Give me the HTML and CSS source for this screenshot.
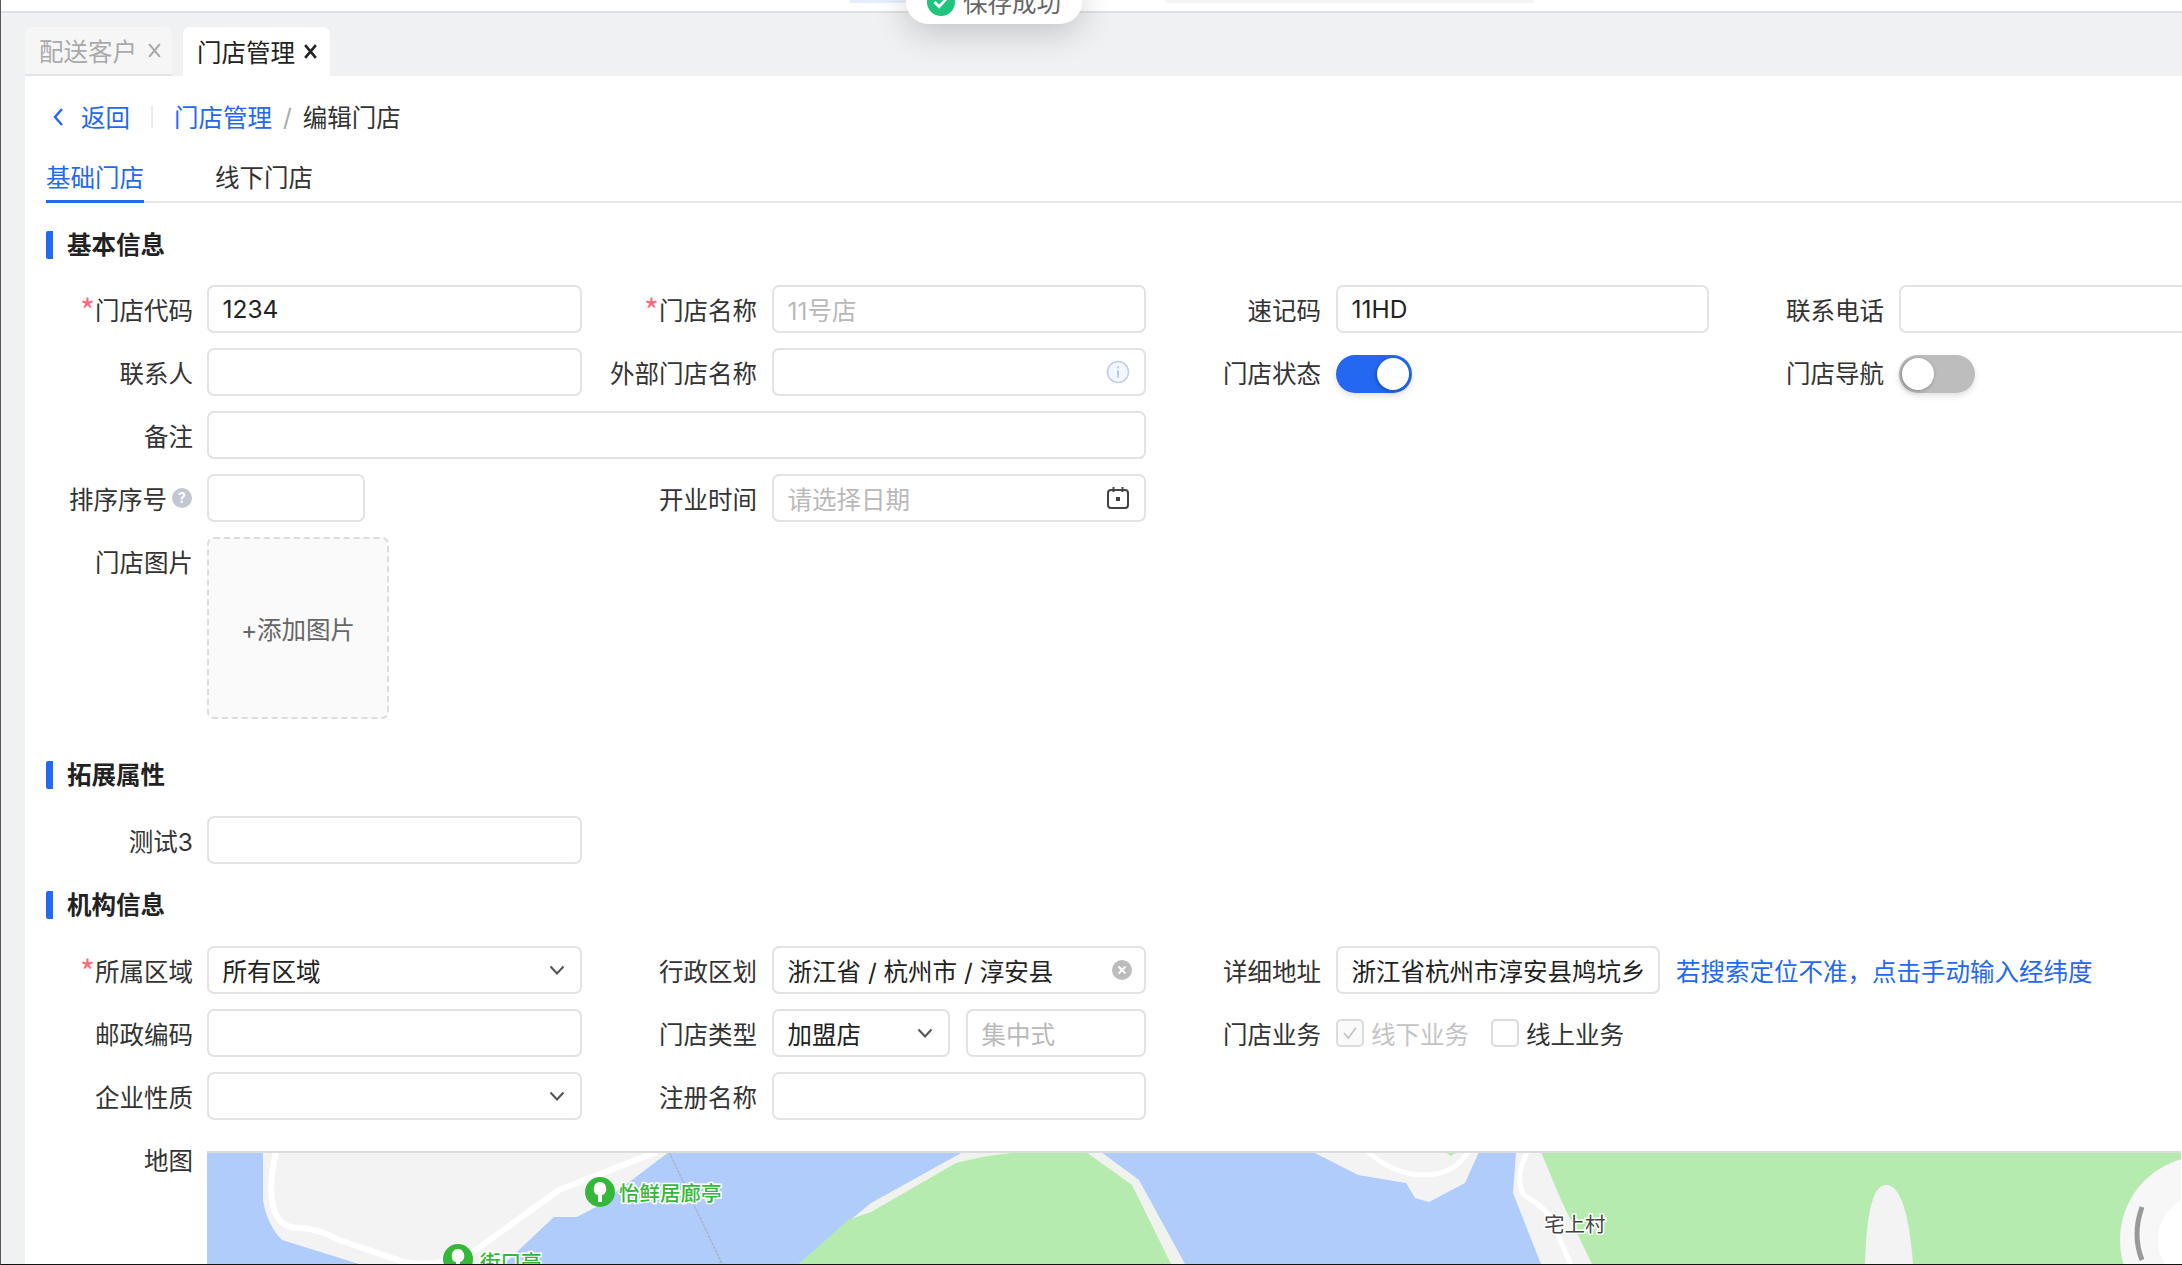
FILE: index.html
```html
<!DOCTYPE html>
<html lang="zh-CN">
<head>
  <meta charset="UTF-8">
  <title>编辑门店</title>
  <link rel="stylesheet" href="styles.css">
</head>
<body>
  <!-- Top bar -->
  <div class="topbar">
    <span class="topbar-seg seg-blue"></span>
    <span class="topbar-seg seg-gray"></span>
  </div>

  <!-- Toast -->
  <div class="toast">
    <svg class="toast-icon" viewBox="0 0 30 30"><circle cx="15" cy="15" r="15" fill="#1fc47d"/><path d="M8 15l5 5 9-10" fill="none" stroke="#fff" stroke-width="3"/></svg>
    <span>保存成功</span>
  </div>

  <!-- Page tabs -->
  <div class="page-tabs">
    <div class="page-tab">配送客户
      <svg class="tab-close" viewBox="0 0 14 14"><path d="M2 1l10 12M12 1L2 13" stroke="#aaa" stroke-width="2"/></svg>
    </div>
    <div class="page-tab active">门店管理
      <svg class="tab-close" viewBox="0 0 14 14"><path d="M2 1l10 12M12 1L2 13" stroke="#222" stroke-width="2.4"/></svg>
    </div>
  </div>

  <div class="content">
    <!-- Breadcrumb -->
    <div class="crumbs">
      <svg class="back-icon" viewBox="0 0 12 20"><path d="M10 2L3 10l7 8" fill="none" stroke="#2468f2" stroke-width="2.4"/></svg>
      <a class="link back-link">返回</a>
      <span class="crumb-divider"></span>
      <a class="link">门店管理</a>
      <span class="crumb-sep">/</span>
      <span>编辑门店</span>
    </div>

    <div class="sub-tabs">
      <div class="sub-tab active">基础门店</div>
      <div class="sub-tab">线下门店</div>
    </div>

    <!-- 基本信息 -->
    <h3 class="section-title first">基本信息</h3>
    <div class="form-grid">
      <label class="label row-start"><i>*</i>门店代码</label>
      <div class="input">1234</div>
      <label class="label"><i>*</i>门店名称</label>
      <div class="input placeholder">11号店</div>
      <label class="label">速记码</label>
      <div class="input">11HD</div>
      <label class="label">联系电话</label>
      <div class="input"></div>

      <label class="label row-start">联系人</label>
      <div class="input"></div>
      <label class="label">外部门店名称</label>
      <div class="input">
        <svg class="input-icon" viewBox="0 0 24 24"><circle cx="12" cy="12" r="10.5" fill="#f4f7fd" stroke="#c5d0e4" stroke-width="1.6"/><path d="M12 10.5v7M12 6.5v2" stroke="#a9bbdb" stroke-width="1.6"/></svg>
      </div>
      <label class="label">门店状态</label>
      <div class="switch on"><span class="knob"></span></div>
      <label class="label">门店导航</label>
      <div class="switch"><span class="knob"></span></div>

      <label class="label row-start">备注</label>
      <div class="input span-3"></div>

      <label class="label row-start">排序序号
        <svg class="help-icon" viewBox="0 0 20 20"><circle cx="10" cy="10" r="10" fill="#c3c7d2"/><text x="10" y="15" text-anchor="middle" class="help-mark">?</text></svg>
      </label>
      <div class="input short"></div>
      <label class="label">开业时间</label>
      <div class="input placeholder">请选择日期
        <svg class="input-icon" viewBox="0 0 24 24"><rect x="2" y="4" width="20" height="18" rx="3" fill="none" stroke="#444" stroke-width="2"/><path d="M7.5 1v5M16.5 1v5" stroke="#444" stroke-width="2"/><rect x="10" y="11" width="4" height="4" fill="#444"/></svg>
      </div>

      <label class="label row-start">门店图片</label>
      <div class="upload">+添加图片</div>
    </div>

    <!-- 拓展属性 -->
    <h3 class="section-title">拓展属性</h3>
    <div class="form-grid">
      <label class="label row-start">测试3</label>
      <div class="input"></div>
    </div>

    <!-- 机构信息 -->
    <h3 class="section-title tight">机构信息</h3>
    <div class="form-grid">
      <label class="label row-start"><i>*</i>所属区域</label>
      <div class="input">所有区域
        <svg class="chevron" viewBox="0 0 16 10"><path d="M1.5 1.5L8 8.5l6.5-7" fill="none" stroke="#555" stroke-width="2"/></svg>
      </div>
      <label class="label">行政区划</label>
      <div class="input">浙江省 / 杭州市 / 淳安县
        <svg class="clear-icon" viewBox="0 0 20 20"><circle cx="10" cy="10" r="10" fill="#bcbcbc"/><path d="M6.5 6.5l7 7M13.5 6.5l-7 7" stroke="#fff" stroke-width="2"/></svg>
      </div>
      <label class="label">详细地址</label>
      <div class="address-cell">
        <div class="input address">浙江省杭州市淳安县鸠坑乡</div>
        <a class="link address-tip">若搜索定位不准，点击手动输入经纬度</a>
      </div>

      <label class="label row-start">邮政编码</label>
      <div class="input"></div>
      <label class="label">门店类型</label>
      <div class="input-pair">
        <div class="input">加盟店
          <svg class="chevron" viewBox="0 0 16 10"><path d="M1.5 1.5L8 8.5l6.5-7" fill="none" stroke="#555" stroke-width="2"/></svg>
        </div>
        <div class="input placeholder">集中式</div>
      </div>
      <label class="label">门店业务</label>
      <div class="checks">
        <span class="check disabled"><svg viewBox="0 0 28 28"><path d="M7 14l5 6 9-12" fill="none" stroke="#c4c4c4" stroke-width="2"/></svg></span>
        <span class="check-text disabled">线下业务</span>
        <span class="check second"></span>
        <span class="check-text">线上业务</span>
      </div>

      <label class="label row-start">企业性质</label>
      <div class="input">
        <svg class="chevron" viewBox="0 0 16 10"><path d="M1.5 1.5L8 8.5l6.5-7" fill="none" stroke="#555" stroke-width="2"/></svg>
      </div>
      <label class="label">注册名称</label>
      <div class="input"></div>

      <label class="label row-start">地图</label>
      <div class="map">
        <svg class="map-svg" viewBox="208 1152 1974 112">
          <rect x="208" y="1152" width="1974" height="112" fill="#b0ccfb"/>
          <!-- left island -->
          <path d="M264 1152L264 1200Q268 1225 283 1240L360 1264L505 1264L555 1217L578 1217L597 1207L670 1152Z" fill="#f3f3f3"/>
          <path d="M277 1152Q268 1190 276 1212Q282 1228 300 1228Q318 1228 340 1240L405 1262Q440 1268 474 1252L560 1190L658 1152" fill="none" stroke="#fff" stroke-width="6"/>
          <path d="M670 1152L723 1264" fill="none" stroke="#a9b4c6" stroke-width="1.5" stroke-dasharray="3 1"/>
          <!-- middle hill -->
          <path d="M800 1264L849 1222L872 1203L964 1152L1102 1152L1140 1180L1186 1264Z" fill="#f0f2ee"/>
          <path d="M800 1264L849 1220L872 1212L957 1163Q1000 1152 1033 1152L1087 1152L1133 1185L1172 1264Z" fill="#b5ebae"/>
          <!-- peninsula -->
          <path d="M1314 1152L1359 1175L1407 1183L1416 1198L1430 1202L1466 1183L1480 1152Z" fill="#f3f3f3"/>
          <path d="M1369 1152Q1395 1175 1425 1175Q1455 1175 1469 1152" fill="none" stroke="#fff" stroke-width="5"/>
          <path d="M1446 1152h12l-6 4z" fill="#b5ebae"/>
          <!-- right shore -->
          <path d="M1517 1152L1514 1193L1542 1264L2182 1264L2182 1152Z" fill="#f3f3f3"/>
          <path d="M1542 1152L1562 1200L1593 1264L2182 1264L2182 1152Z" fill="#b5ebae"/>
          <path d="M1528 1152Q1515 1180 1525 1195Q1550 1210 1556 1225Q1562 1245 1572 1264" fill="none" stroke="#fff" stroke-width="5"/>
          <path d="M1866 1264Q1868 1185 1887 1185Q1908 1185 1914 1264Z" fill="#f3f3f3"/>
          <!-- map control -->
          <circle cx="2205" cy="1240" r="84" fill="#f7f7f7"/>
          <circle cx="2205" cy="1240" r="46" fill="#fff"/>
          <path d="M2143 1207Q2133 1235 2143 1260" fill="none" stroke="#999" stroke-width="5"/>
          <!-- pois -->
          <g>
            <circle cx="601" cy="1192" r="15" fill="#35b83a"/>
            <path d="M601 1182c5 0 7 5 6 9-1 3-3 4-4 4v7h-4v-7c-2 0-4-2-4-4-1-4 1-9 6-9z" fill="#fff"/>
            <circle cx="459" cy="1259" r="15" fill="#35b83a"/>
            <path d="M459 1249c5 0 7 5 6 9-1 3-3 4-4 4v7h-4v-7c-2 0-4-2-4-4-1-4 1-9 6-9z" fill="#fff"/>
          </g>
          <text class="poi-text" x="620" y="1201">怡鲜居廊亭</text>
          <text class="poi-text" x="481" y="1270">街口亭</text>
          <text class="place-text" x="1545" y="1232">宅上村</text>
        </svg>
      </div>
    </div>
  </div>
</body>
</html>
```

FILE: styles.css
```css
/* Page frame */
html, body {
  margin: 0;
  height: 100%;
}

body {
  box-sizing: border-box;
  height: 1265px;
  overflow: hidden;
  position: relative;
  background: #f0f1f3;
  border-left: 1px solid #55585e;
  border-bottom: 1px solid #111;
  font-family: Inter, "Noto Sans CJK SC", sans-serif;
  font-size: 24.5px;
  color: #333;
}

svg {
  display: block;
}

/* Top bar */
.topbar {
  height: 11px;
  background: #fff;
  border-bottom: 2px solid #dfe0e2;
  display: flex;
  align-items: flex-start;
}

.topbar-seg {
  height: 3px;
}

.seg-blue {
  width: 60px;
  margin-left: 849px;
  background: #e6edfc;
}

.seg-gray {
  width: 368px;
  margin-left: 256px;
  background: #f3f4f6;
}

/* Toast */
.toast {
  position: absolute;
  top: -16px;
  left: 905px;
  width: 176px;
  height: 40px;
  box-sizing: border-box;
  padding: 0 0 5px 21px;
  display: flex;
  align-items: center;
  gap: 8px;
  background: #fff;
  border-radius: 0 0 22px 22px;
  box-shadow: 0 8px 34px rgba(0, 0, 0, 0.2);
  color: #666;
}

.toast-icon {
  width: 28px;
  height: 28px;
  flex: none;
}

/* Page tabs */
.page-tabs {
  display: flex;
  gap: 11px;
  height: 49px;
  padding: 14px 0 0 24px;
}

.page-tab {
  width: 147px;
  box-sizing: border-box;
  padding-left: 14px;
  display: flex;
  align-items: center;
  gap: 10px;
  background: #f6f6f7;
  border-bottom: 2px solid #e4e4e6;
  border-radius: 7px 7px 0 0;
  color: #aaa;
}

.page-tab.active {
  background: #fff;
  border-bottom: 0;
  color: #222;
}

.tab-close {
  width: 15px;
  height: 15px;
}

.page-tab.active .tab-close {
  margin-left: -2px;
}

/* Content */
.content {
  margin-left: 24px;
  height: 1188px;
  padding-left: 21px;
  background: #fff;
  overflow: hidden;
}

.link {
  color: #2468f2;
}

/* Breadcrumb */
.crumbs {
  height: 36px;
  margin-top: 22px;
  padding-top: 1px;
  box-sizing: border-box;
  display: flex;
  align-items: center;
}

.back-icon {
  width: 12px;
  height: 20px;
  margin-left: 6px;
  margin-right: 17px;
}

.crumb-divider {
  width: 2px;
  height: 22px;
  margin: 0 21px;
  background: #ececec;
}

.crumb-sep {
  margin: 0 11px;
  color: #aaa;
}

/* Sub tabs */
.sub-tabs {
  display: flex;
  gap: 71px;
  height: 69px;
  border-bottom: 2px solid #e6e6e6;
  box-sizing: border-box;
}

.sub-tab {
  height: 69px;
  box-sizing: border-box;
  padding-top: 26px;
  line-height: 36px;
}

.sub-tab.active {
  color: #2468f2;
  border-bottom: 3px solid #2468f2;
}

/* Section title */
.section-title {
  margin: 42px 0 27px;
  height: 28px;
  line-height: 28px;
  font-size: 24.5px;
  font-weight: 700;
  color: #222;
  border-left: 7px solid #2468f2;
  padding-left: 14px;
  border-radius: 2px;
}

.section-title.first {
  margin-top: 28px;
  margin-bottom: 26px;
}

.section-title.tight {
  margin-top: 27px;
}

/* Form grid */
.form-grid {
  display: grid;
  grid-template-columns: 146px 375px 160px 374px 160px 373px 160px 300px;
  grid-auto-rows: minmax(48px, auto);
  column-gap: 15px;
  row-gap: 15px;
  justify-content: start;
}

.label {
  height: 48px;
  display: flex;
  align-items: center;
  justify-content: flex-end;
  white-space: nowrap;
  color: #333;
}

.row-start {
  grid-column: 1;
  margin-right: -1px;
}

.label i {
  font-style: normal;
  font-family: "Noto Sans CJK SC", sans-serif;
  font-size: 32px;
  line-height: 1;
  color: #fb6b78;
}

.input {
  position: relative;
  box-sizing: border-box;
  height: 48px;
  padding: 0 13.5px;
  display: flex;
  align-items: center;
  background: #fff;
  border: 2px solid #e3e3e5;
  border-radius: 7px;
  color: #222;
  white-space: nowrap;
}

.input.placeholder {
  color: #b9b9b9;
}

.span-3 {
  grid-column: 2 / span 3;
}

.input.short {
  width: 158px;
}

.input-icon,
.chevron,
.clear-icon {
  position: absolute;
  top: 50%;
  transform: translateY(-50%);
}

.input-icon {
  right: 14px;
  width: 24px;
  height: 24px;
}

.chevron {
  right: 15px;
  width: 16px;
  height: 10px;
}

.clear-icon {
  right: 12px;
  width: 20px;
  height: 20px;
}

.help-icon {
  width: 20px;
  height: 20px;
  margin-left: 5px;
  margin-right: 1px;
  flex: none;
}

.help-mark {
  font-size: 14px;
  font-weight: 700;
  fill: #fff;
}

/* Switches */
.switch {
  position: relative;
  width: 76px;
  height: 38px;
  margin-top: 7px;
  border-radius: 19px;
  background: #bdbdbd;
  box-shadow: 0 3px 6px rgba(0, 0, 0, 0.12);
}

.switch.on {
  background: #2468f2;
}

.knob {
  position: absolute;
  top: 3px;
  left: 3px;
  width: 32px;
  height: 32px;
  border-radius: 50%;
  background: #fff;
  box-shadow: -1px 1px 4px rgba(0, 0, 0, 0.3);
}

.switch.on .knob {
  left: 41px;
}

/* Upload */
.upload {
  box-sizing: border-box;
  width: 182px;
  height: 182px;
  display: flex;
  align-items: center;
  justify-content: center;
  background: #fafafa;
  border: 2px dashed #dcdcdc;
  border-radius: 7px;
  color: #666;
}

/* Address */
.address-cell {
  grid-column: span 3;
  display: flex;
  align-items: center;
  gap: 16px;
}

.input.address {
  width: 324px;
  flex: none;
}

.address-tip {
  white-space: nowrap;
}

.input-pair {
  display: grid;
  grid-template-columns: 178px 180px;
  gap: 16px;
}

/* Checkboxes */
.checks {
  display: flex;
  align-items: center;
  grid-column: span 3;
}

.check {
  box-sizing: border-box;
  width: 28px;
  height: 28px;
  margin-right: 7px;
  background: #fff;
  border: 2px solid #dcdcdc;
  border-radius: 5px;
}

.check.disabled {
  background: #fafafa;
}

.check.second {
  margin-left: 22px;
}

.check-text.disabled {
  color: #c4c4c4;
}

/* Map */
.map {
  grid-column: 2 / span 7;
  width: 1974px;
  height: 113px;
  margin-top: 16px;
  box-sizing: border-box;
  border-top: 2px solid #dcdcdc;
  overflow: hidden;
}

.map-svg {
  width: 1974px;
  height: 112px;
  margin-top: -1px;
}

.poi-text {
  font-size: 20.5px;
  font-weight: 500;
  fill: #35b83a;
  stroke: #fff;
  stroke-width: 3px;
  paint-order: stroke;
}

.place-text {
  font-size: 20.5px;
  fill: #444;
  stroke: #fff;
  stroke-width: 3px;
  paint-order: stroke;
}
```
